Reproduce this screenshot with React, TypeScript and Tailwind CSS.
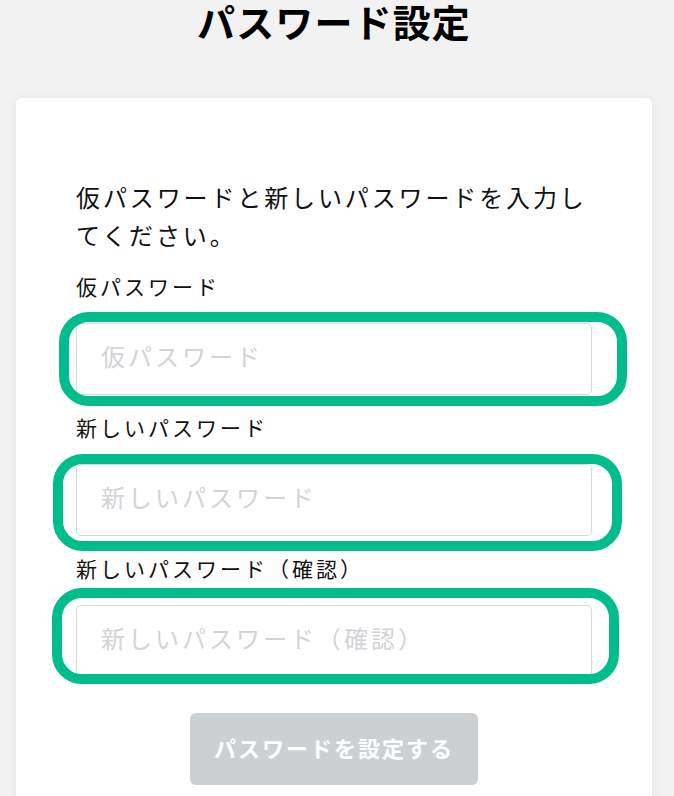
import React from "react";

type Field = {
  label: string;
  ring: string;
};

const fields: Field[] = [
  { label: "仮パスワード", ring: "left-[-17px] right-[-35px] top-[-11px] bottom-[-11px]" },
  { label: "新しいパスワード", ring: "left-[-23px] right-[-30px] top-[-10px] bottom-[-15px]" },
  { label: "新しいパスワード（確認）", ring: "left-[-24px] right-[-27px] top-[-17px] bottom-[-7px]" },
];

export default function App() {
  return (
    <div className="min-h-screen bg-[#f2f2f2] pl-4 pr-[22px] text-[#111] font-['Noto_Sans_CJK_JP',sans-serif]">
      <h1 className="text-center text-[38px] font-bold leading-[42px] tracking-[0.03em] text-black">
        パスワード設定
      </h1>

      <div className="mt-[56px] rounded-md bg-white px-[60px] pt-[80px] pb-16 shadow-[0_0_10px_rgba(0,0,0,0.06)]">
        <form className="flex flex-col gap-[17px]">
          <p className="text-[24px] leading-[38px] tracking-[0.12em]">
            仮パスワードと新しいパスワードを入力してください。
          </p>

          {fields.map((f) => (
            <label key={f.label} className="flex flex-col">
              <span className="mb-[22px] text-[21px] leading-[30px] tracking-[3px]">{f.label}</span>
              <div className="relative">
                <input
                  type="password"
                  placeholder={f.label}
                  className="h-[72px] w-full rounded-[5px] border border-[#d9d9d9] bg-white px-6 pb-2 text-[24px] tracking-[3px] outline-none placeholder:text-[#d3d3d8]"
                />
                <div
                  className={`pointer-events-none absolute rounded-[30px] border-[10px] border-[#00bd8b] ${f.ring}`}
                />
              </div>
            </label>
          ))}

          <div className="mt-[19px] flex justify-center">
            <button
              type="button"
              disabled
              className="h-[72px] rounded-md bg-[#cdd0d2] px-6 pb-1 text-[22px] font-bold tracking-[2px] text-white"
            >
              パスワードを設定する
            </button>
          </div>
        </form>
      </div>
    </div>
  );
}
